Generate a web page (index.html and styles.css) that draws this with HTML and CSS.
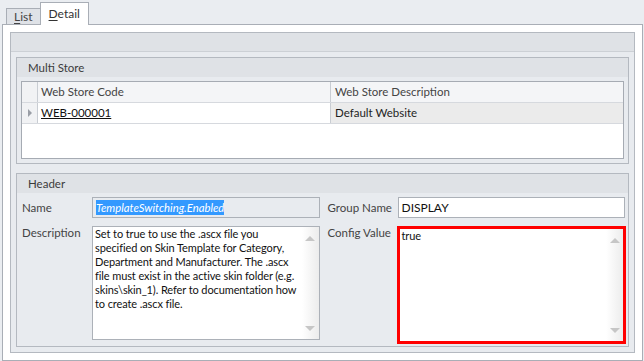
FILE: index.html
```html
<!DOCTYPE html>
<html lang="en">

<head>
    <meta charset="UTF-8">
    <title>Configuration Detail</title>
    <link rel="stylesheet" href="styles.css">
</head>

<body>
    <div class="tabs">
        <div class="tab"><u>L</u>ist</div>
        <div class="tab active"><u>D</u>etail</div>
    </div>

    <div class="page">
        <div class="layout">
            <div class="layout-head"></div>
            <div class="layout-body">

                <div class="group store">
                    <div class="group-head">Multi Store</div>
                    <div class="group-body">
                        <div class="grid">
                            <div class="grid-row grid-header">
                                <div class="indicator"></div>
                                <div class="cell code">Web Store Code</div>
                                <div class="cell desc">Web Store Description</div>
                            </div>
                            <div class="grid-row">
                                <div class="indicator"><span class="arrow"></span></div>
                                <div class="cell code"><a href="#">WEB-000001</a></div>
                                <div class="cell desc focused">Default Website</div>
                            </div>
                        </div>
                    </div>
                </div>

                <div class="group header">
                    <div class="group-head">Header</div>
                    <div class="form">
                        <label class="label">Name</label>
                        <div class="input readonly"><span class="selected">TemplateSwitching.Enabled</span></div>
                        <label class="label">Group Name</label>
                        <div class="input">DISPLAY</div>

                        <label class="label top">Description</label>
                        <div class="memo">
                            <div class="memo-text">Set to true to use the .ascx file you specified on Skin Template for Category, Department and Manufacturer. The .ascx file must exist in the active skin folder (e.g. skins\skin_1). Refer to documentation how to create .ascx file.</div>
                            <div class="scrollbar"><span class="up"></span><span class="down"></span></div>
                        </div>
                        <label class="label top">Config Value</label>
                        <div class="memo highlight">
                            <div class="memo-text">true</div>
                            <div class="scrollbar"><span class="up"></span><span class="down"></span></div>
                        </div>
                    </div>
                </div>

            </div>
        </div>
    </div>
</body>

</html>
```

FILE: styles.css
```css
* {
    box-sizing: border-box;
}

body {
    margin: 0;
    background-color: #eaedf1;
    font-family: Lato, "Open Sans", sans-serif;
    font-size: 11.5px;
    color: #333;
}

/* tab strip */

.tabs {
    display: flex;
    align-items: flex-end;
    height: 24px;
    padding-left: 6px;
}

.tab {
    height: 16px;
    line-height: 15px;
    padding: 0 7px;
    border: 1px solid #a9aeb6;
    border-bottom: 0;
    background-color: #dfe2e7;
    font-size: 12px;
    color: #444;
}

.tab.active {
    position: relative;
    z-index: 1;
    height: 23px;
    margin-bottom: -1px;
    margin-left: -1px;
    padding: 0 8px;
    line-height: 22px;
    background-color: #fff;
    color: #333;
}

.tab u {
    text-underline-offset: 2px;
}

/* page and layout */

.page {
    width: 641px;
    height: 337px;
    margin-left: 2px;
    padding: 7px;
    border: 1px solid #a9aeb6;
    background-color: #fff;
}

.layout {
    display: flex;
    flex-direction: column;
    height: 100%;
    border: 1px solid #b4b9c0;
    background-color: #e8ebef;
}

.layout-head {
    height: 19px;
    border-bottom: 1px solid #ccd0d5;
    background-color: #dfe2e6;
}

.layout-body {
    display: flex;
    flex: 1;
    flex-direction: column;
    gap: 9px;
    padding: 5px;
}

.group {
    border: 1px solid #b4b9c0;
    background-color: #e8ebef;
}

.group.store {
    height: 107px;
}

.group.header {
    flex: 1;
}

.group-head {
    height: 19px;
    padding-left: 11px;
    line-height: 19px;
    background-color: #dfe2e6;
    color: #3b3b3b;
}

.group-body {
    padding: 4px;
}

/* grid */

.grid {
    height: 78px;
    border: 1px solid #a6abb3;
    background-color: #fff;
}

.grid-row {
    display: flex;
    height: 21px;
    border-bottom: 1px solid #d6d9de;
}

.grid-header {
    background-color: #f4f5f7;
}

.indicator {
    display: flex;
    align-items: center;
    justify-content: center;
    width: 16px;
    border-right: 1px solid #c9cdd3;
    background-color: #f1f2f4;
}

.arrow {
    width: 0;
    height: 0;
    border-top: 4px solid transparent;
    border-bottom: 4px solid transparent;
    border-left: 4px solid #9a9ea6;
}

.cell {
    padding-left: 3px;
    line-height: 20px;
    color: #1e1e1e;
}

.grid-header .cell {
    color: #444;
}

.cell.code {
    width: 293px;
    border-right: 1px solid #c9cdd3;
}

.cell.desc {
    flex: 1;
    padding-left: 4px;
}

.cell.focused {
    background-color: #ebebeb;
}

.cell a {
    color: #111;
}

/* form */

.form {
    display: grid;
    grid-template-columns: 70px 1fr 78px 1fr;
    grid-template-rows: 21px 114px;
    row-gap: 8px;
    padding: 4px 3px 0 5px;
}

.label {
    padding-top: 4px;
    line-height: 14px;
    color: #444;
}

.label.top {
    padding-top: 0;
}

.form .label:nth-of-type(even) {
    padding-left: 8px;
}

.input {
    padding-left: 3px;
    border: 1px solid #acb1b8;
    background-color: #fff;
    line-height: 19px;
    font-size: 12px;
    color: #111;
}

.input.readonly {
    background-color: #e8ebef;
}

.selected {
    padding: 1px 0;
    background-color: #3399ff;
    color: #fff;
    font-size: 11.3px;
    font-style: italic;
}

.memo {
    display: flex;
    border: 1px solid #acb1b8;
    background-color: #fff;
}

.memo-text {
    flex: 1;
    padding: 0 1px 0 2px;
    line-height: 14px;
    font-size: 11px;
    letter-spacing: -0.1px;
    color: #111;
}

.memo.highlight {
    height: 118px;
    margin-left: -1px;
    margin-right: -1px;
    border: 3px solid #ff0000;
}

.scrollbar {
    display: flex;
    flex-direction: column;
    justify-content: space-between;
    align-items: center;
    width: 17px;
    padding: 9px 0 8px;
    background: linear-gradient(to right, #fff, #ececec);
}

.up,
.down {
    width: 0;
    height: 0;
    border-left: 5px solid transparent;
    border-right: 5px solid transparent;
}

.up {
    border-bottom: 5px solid #c6c6c6;
}

.down {
    border-top: 5px solid #c6c6c6;
}
```
